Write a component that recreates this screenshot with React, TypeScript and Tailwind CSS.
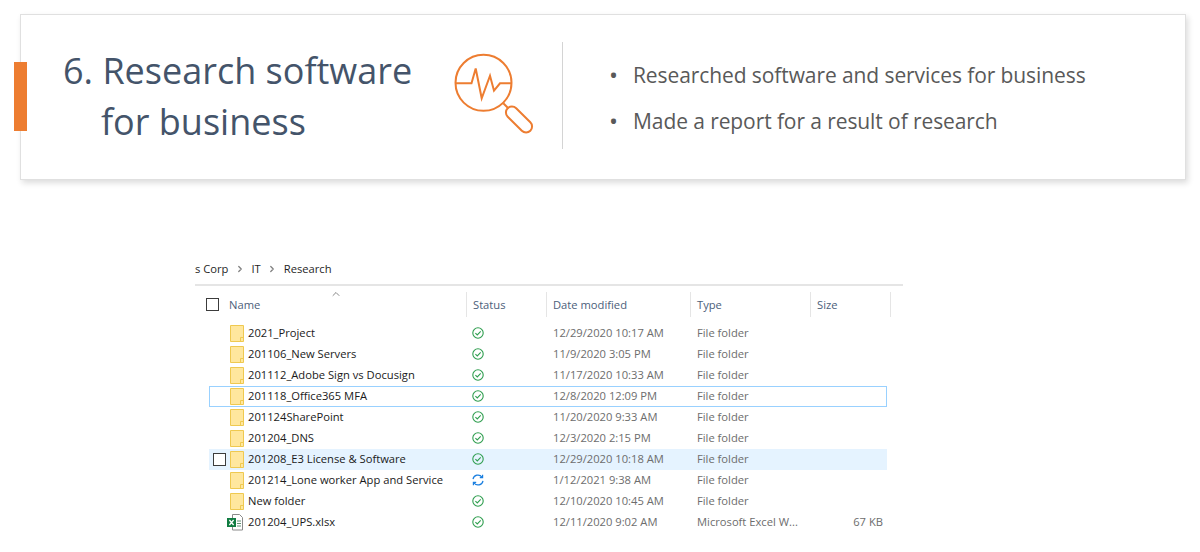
import { ChevronRight, ChevronUp } from 'lucide-react';

const files = [
  { name: '2021_Project', date: '12/29/2020 10:17 AM', type: 'File folder' },
  { name: '201106_New Servers', date: '11/9/2020 3:05 PM', type: 'File folder' },
  { name: '201112_Adobe Sign vs Docusign', date: '11/17/2020 10:33 AM', type: 'File folder' },
  { name: '201118_Office365 MFA', date: '12/8/2020 12:09 PM', type: 'File folder', focused: true },
  { name: '201124SharePoint', date: '11/20/2020 9:33 AM', type: 'File folder' },
  { name: '201204_DNS', date: '12/3/2020 2:15 PM', type: 'File folder' },
  { name: '201208_E3 License & Software', date: '12/29/2020 10:18 AM', type: 'File folder', hovered: true },
  { name: '201214_Lone worker App and Service', date: '1/12/2021 9:38 AM', type: 'File folder', syncing: true },
  { name: 'New folder', date: '12/10/2020 10:45 AM', type: 'File folder' },
  { name: '201204_UPS.xlsx', date: '12/11/2020 9:02 AM', type: 'Microsoft Excel W...', size: '67 KB', excel: true },
];

const columns = [
  { label: 'Status', width: 'w-[80px]' },
  { label: 'Date modified', width: 'w-[144px]' },
  { label: 'Type', width: 'w-[120px]' },
  { label: 'Size', width: 'w-[80px]' },
];

function ResearchIcon() {
  return (
    <svg viewBox="452 52 84 84" className="w-[84px] h-[84px] shrink-0" fill="none" stroke="#ed7d31" strokeWidth="2">
      <circle cx="483.5" cy="82.8" r="28" />
      <path d="M455.5 83.3H471.5L475.7 68.5L481.7 98.3L490 75.7L494 90.7L500 83.3H511.5" strokeLinejoin="miter" />
      <path d="M503.3 103.3L508.5 108.5" />
      <rect x="503" y="113.5" width="32" height="12" rx="6" transform="rotate(45 519 119.5)" />
    </svg>
  );
}

function FolderIcon() {
  return (
    <svg viewBox="0 0 14 17" className="w-[14px] h-[17px]">
      <path d="M0.5 0.5H13.5V16.5H0.5Z" fill="#ffe79e" stroke="#efc950" />
      <path d="M10.5 16.5V12.5H13.5" fill="none" stroke="#efc950" />
    </svg>
  );
}

function ExcelIcon() {
  return (
    <svg viewBox="0 0 17 17" className="w-[17px] h-[17px]">
      <path d="M5.5 0.5H12.5L15.5 3.5V16H5.5Z" fill="#fff" stroke="#8a8a8a" />
      <path d="M10 7H14M10 9.5H14M10 12H14" stroke="#5f8f74" />
      <rect x="0" y="4" width="9" height="9" fill="#107c41" />
      <path d="M2.4 6L6.6 11M6.6 6L2.4 11" stroke="#fff" strokeWidth="1.3" />
    </svg>
  );
}

function CheckIcon() {
  return (
    <svg viewBox="0 0 12 12" className="w-[12px] h-[12px] mt-[-1px]" fill="none" stroke="#2f9e4f" strokeWidth="1.1">
      <circle cx="6" cy="6" r="5.2" />
      <path d="M3.4 6.1L5.3 8L8.7 4.4" />
    </svg>
  );
}

function SyncIcon() {
  return (
    <svg viewBox="0 0 12 12" className="w-[12px] h-[12px] mt-[-1px]" fill="none" stroke="#1a7fe0" strokeWidth="1.2">
      <path d="M1 5.2A5 5 0 0 1 10 3.2" />
      <path d="M10.6 0.8V3.6H7.8" />
      <path d="M11 6.8A5 5 0 0 1 2 8.8" />
      <path d="M1.4 11.2V8.4H4.2" />
    </svg>
  );
}

function Checkbox() {
  return <div className="w-[13px] h-[13px] border border-[#3c3c3c] bg-white" />;
}

export default function App() {
  return (
    <div className="w-[1200px] h-[552px] overflow-hidden bg-white pt-[14px] pl-[20px] font-['Open_Sans',sans-serif]">
      {/* Slide card */}
      <div className="relative w-[1166px] h-[166px] border border-[#e0e0e0] bg-white shadow-[2px_3px_6px_rgba(0,0,0,0.14)] flex items-center pl-[42px]">
        <div className="absolute left-[-7px] top-[47px] w-[13px] h-[69px] bg-[#ed7d31]" />
        <h1 className="w-[349px] shrink-0 mt-[-3px] text-[36px] leading-[51px] text-[#44546a] whitespace-nowrap">
          6. Research software
          <br />
          <span className="ml-[38px]">for business</span>
        </h1>
        <div className="ml-[40px] mt-[-6px]">
          <ResearchIcon />
        </div>
        <div className="ml-[26px] w-px h-[107px] bg-[#d4d4d4] mt-[-4px]" />
        <ul className="ml-[46px] mt-[2px] flex flex-col gap-[14px] text-[21px] tracking-[-0.09px] leading-[32px] text-[#595959]">
          <li className="flex">
            <span className="w-[24px] text-[24px]">•</span>Researched software and services for business
          </li>
          <li className="flex">
            <span className="w-[24px] text-[24px]">•</span>Made a report for a result of research
          </li>
        </ul>
      </div>

      {/* Explorer window */}
      <div className="mt-[80px] ml-[175px] w-[708px] text-[11.2px]">
        <div className="h-[18px] flex items-center text-[#1f1f1f]">
          <span>s Corp</span>
          <ChevronRight className="w-[10px] h-[10px] mx-[6.5px] text-[#808080]" strokeWidth={3} />
          <span>IT</span>
          <ChevronRight className="w-[10px] h-[10px] mx-[6.5px] text-[#808080]" strokeWidth={3} />
          <span>Research</span>
        </div>
        <div className="h-[2px] bg-[#e5e5e5] mt-[6px]" />

        {/* Column headers */}
        <div className="relative flex h-[25px] mt-[6px] text-[#4c607a]">
          <div className="w-[272px] border-r border-[#e5e5e5] flex items-center">
            <div className="ml-[11px]">
              <Checkbox />
            </div>
            <span className="ml-[10px] pt-[1px]">Name</span>
          </div>
          <ChevronUp className="absolute left-[135px] top-[-4px] w-[12px] h-[12px] text-[#606060]" strokeWidth={1.5} />
          {columns.map(col => (
            <div key={col.label} className={`${col.width} border-r border-[#e5e5e5] flex items-center pl-[6px] pt-[1px]`}>
              {col.label}
            </div>
          ))}
        </div>

        {/* Rows */}
        <div className="mt-[6px] ml-[14px] w-[678px]">
          {files.map(file => (
            <div
              key={file.name}
              className={`grid grid-cols-[20px_19px_224px_81px_144px_120px_70px] items-center h-[21px] ${
                file.hovered ? 'bg-[#e5f3ff]' : ''
              } ${file.focused ? 'outline-1 -outline-offset-1 outline-[#99d1ff]' : ''}`}
            >
              <div className="pl-[4px]">{file.hovered && <Checkbox />}</div>
              <div className={file.excel ? 'ml-[-2px]' : 'pl-[1px]'}>{file.excel ? <ExcelIcon /> : <FolderIcon />}</div>
              <div className="text-[#1a1a1a] whitespace-nowrap">{file.name}</div>
              <div>{file.syncing ? <SyncIcon /> : <CheckIcon />}</div>
              <div className="text-[#6d6d6d] whitespace-nowrap">{file.date}</div>
              <div className="text-[#6d6d6d] whitespace-nowrap">{file.type}</div>
              <div className="text-[#6d6d6d] text-right pr-[4px]">{file.size}</div>
            </div>
          ))}
        </div>
      </div>
    </div>
  );
}
